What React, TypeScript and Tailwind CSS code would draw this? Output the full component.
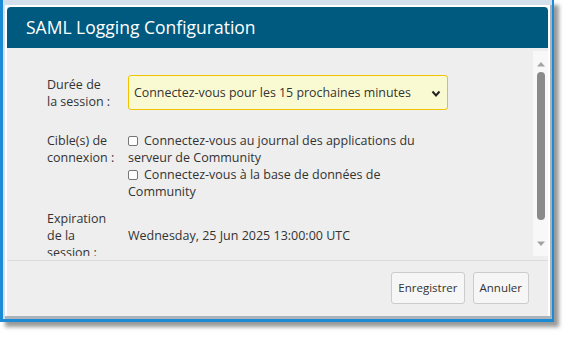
import React from "react";

const font = { fontFamily: '"Open Sans", "Noto Sans", sans-serif' };

function Checkbox() {
  return <span className="inline-block w-[10px] h-[10px] mr-[6px] align-[-1px] rounded-[2px] border border-[#767676] bg-white" />;
}

function Scrollbar() {
  return (
    <div className="w-[15px] mt-[3px] bg-[#f8f8f8] flex flex-col items-center">
      <svg width="10" height="8" viewBox="0 0 10 8" className="mt-[9px]">
        <path d="M1 6.5 L5 2 L9 6.5 Z" fill="#a3a3a3" />
      </svg>
      <div className="w-[8px] h-[148px] mt-[4px] rounded-full bg-[#8a8a8a]" />
      <div className="flex-1" />
      <svg width="10" height="8" viewBox="0 0 10 8" className="mb-[8px]">
        <path d="M1 1.5 L9 1.5 L5 6 Z" fill="#a3a3a3" />
      </svg>
    </div>
  );
}

export default function App() {
  return (
    <div className="w-[568px] h-[337px] bg-white overflow-hidden text-[#333333]" style={font}>
      <div className="w-[554px] h-[322px] flex flex-col bg-[#d3dfea] pt-[5px] pl-[2px] border-l-[3px] border-r-[2px] border-b-[3px] border-[#1b8bd6] shadow-[5px_5px_4px_rgba(0,0,0,0.4)]">
        <div className="flex-1 flex flex-col border-r-2 border-b-[3px] border-[#aab3bc]">
          <div className="flex-1 flex flex-col border-t-2 border-l-2 border-r-2 border-white bg-[#eeeeee]">
            <div className="h-[41px] shrink-0 flex items-center pl-[19px] rounded-t-[4px] bg-[#00597f] text-white text-[17.5px]">
              SAML Logging Configuration
            </div>

            <div className="h-[212px] flex pb-[4px]">
              <div className="flex-1 overflow-hidden pl-[40px] pt-[27px] text-[12.5px] leading-[17px]">
                <div className="flex items-center">
                  <div className="w-[81px]">
                    Durée de<br />la session :
                  </div>
                  <div className="relative w-[320px] h-[35px] flex items-center pl-[5px] rounded-[3px] border border-[#f2c200] bg-[#fafad2] text-[12.4px]">
                    Connectez-vous pour les 15 prochaines minutes
                    <svg width="10" height="8" viewBox="0 0 10 8" className="absolute right-[6px] top-[14px]">
                      <path d="M1.5 1.5 L5 5.5 L8.5 1.5" fill="none" stroke="#222" strokeWidth="2" />
                    </svg>
                  </div>
                </div>

                <div className="flex mt-[22px]">
                  <div className="w-[81px]">
                    Cible(s) de<br />connexion :
                  </div>
                  <div>
                    <div>
                      <Checkbox />Connectez-vous au journal des applications du<br />serveur de Community
                    </div>
                    <div>
                      <Checkbox />Connectez-vous à la base de données de<br />Community
                    </div>
                  </div>
                </div>

                <div className="flex items-center mt-[10px]">
                  <div className="w-[81px]">
                    Expiration<br />de la<br />session :
                  </div>
                  <div>Wednesday, 25 Jun 2025 13:00:00 UTC</div>
                </div>
              </div>
              <Scrollbar />
            </div>

            <div className="flex-1 flex justify-end items-start gap-[8px] pt-[11px] pr-[19px] border-t border-[#dcdcdc] text-[11.5px]">
              <button className="h-[32px] px-[6px] rounded-[3px] border border-[#cccccc] bg-[#f6f6f6] text-[#333]">Enregistrer</button>
              <button className="h-[32px] px-[6px] rounded-[3px] border border-[#cccccc] bg-[#f6f6f6] text-[#333]">Annuler</button>
            </div>
          </div>
        </div>
      </div>
    </div>
  );
}
